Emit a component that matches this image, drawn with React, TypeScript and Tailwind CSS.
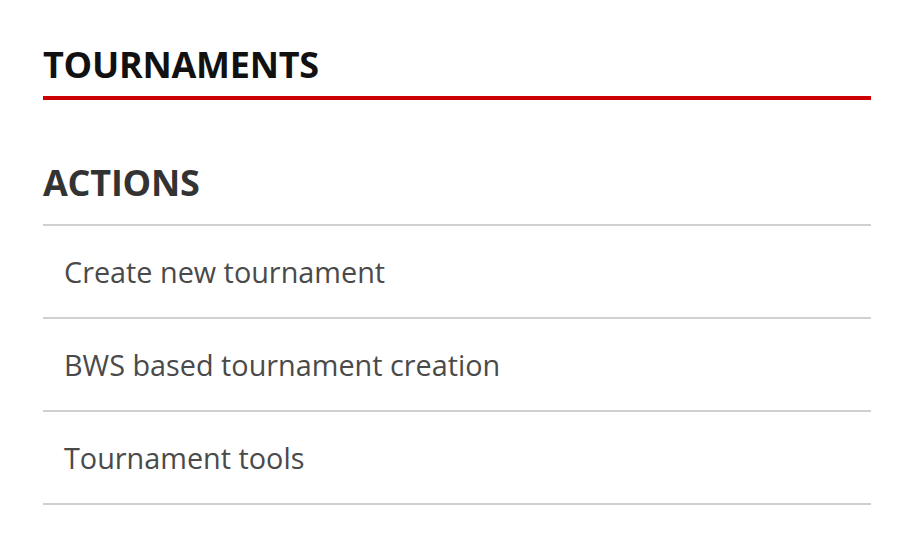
export default function App() {
  const items = ["Create new tournament", "BWS based tournament creation", "Tournament tools"];
  return (
    <div className="min-h-[539px] bg-white pl-[43px] pr-[36px] pt-[41px]" style={{ fontFamily: '"Open Sans", sans-serif' }}>
      <h1 className="text-[36px] font-bold leading-[48px] text-[#111111] tracking-[-0.25px]">TOURNAMENTS</h1>
      <div className="mt-[7px] h-[4px] bg-[#cc0000]" />
      <h2 className="mt-[59px] text-[36px] font-bold leading-[48px] text-[#333333] tracking-[-0.25px]">ACTIONS</h2>
      <div className="mt-[17px] border-t-2 border-[#d0d0d0]">
        {items.map((t) => (
          <div key={t} className="flex h-[93px] items-center border-b-2 border-[#d0d0d0] pl-[21px] text-[28.8px] text-[#4a4a4a]">
            {t}
          </div>
        ))}
      </div>
    </div>
  );
}
